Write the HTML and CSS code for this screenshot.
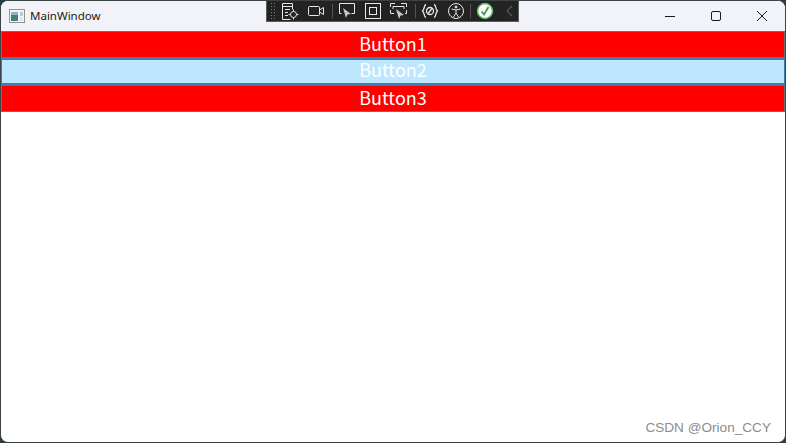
FILE: index.html
```html
<!DOCTYPE html>
<html lang="en">
<head>
    <meta charset="UTF-8">
    <title>MainWindow</title>
    <link rel="stylesheet" href="styles.css">
</head>
<body>
    <div class="window">
        <header class="titlebar">
            <svg class="app-icon" width="16" height="14" viewBox="0 0 16 14">
                <rect x="0.5" y="0.5" width="15" height="13" fill="#f4f6f6" stroke="#8d9499"/>
                <rect x="2" y="3" width="7" height="9" fill="#3f7f7c"/>
                <rect x="2" y="3" width="7" height="3" fill="#8fb4c4"/>
                <rect x="11" y="3" width="3" height="4" fill="#b9cdd6"/>
                <rect x="11" y="8" width="3" height="4" fill="#dfe6e8"/>
            </svg>
            <span class="title">MainWindow</span>
            <div class="caption-buttons">
                <svg class="caption-btn" width="46" height="30" viewBox="0 0 46 30">
                    <path d="M18 15.5h10" stroke="#1a1a1a" stroke-width="1"/>
                </svg>
                <svg class="caption-btn" width="46" height="30" viewBox="0 0 46 30">
                    <rect x="18.5" y="10.5" width="9" height="9" rx="1.5" fill="none" stroke="#1a1a1a"/>
                </svg>
                <svg class="caption-btn" width="46" height="30" viewBox="0 0 46 30">
                    <path d="M18 10l10 10M28 10l-10 10" stroke="#1a1a1a" stroke-width="1" fill="none"/>
                </svg>
            </div>
        </header>

        <!-- debug toolbar that sits over the title bar -->
        <div class="dev-toolbar">
            <span class="grip"></span>
            <svg class="tool" width="20" height="20" viewBox="0 0 20 20" fill="none" stroke="#e8e8e8">
                <path d="M12.5 8.5V2.5H2.5v16h8M2.5 5.5h10M5 8.5h5M5 11.5h3M5 14.500h3"/>
                <circle cx="13.5" cy="13.5" r="3"/>
                <path d="M13.5 8.5v2M13.5 16.5v2M8.5 13.5h2M16.5 13.5h2"/>
            </svg>
            <svg class="tool" width="20" height="20" viewBox="0 0 20 20" fill="none" stroke="#e8e8e8">
                <rect x="2.5" y="5.5" width="11" height="9" rx="1"/>
                <path d="M13.5 9l4-2.500v7l-4-2.500"/>
            </svg>
            <span class="sep"></span>
            <svg class="tool" width="20" height="20" viewBox="0 0 20 20" fill="none" stroke="#e8e8e8">
                <path d="M4.5 12.5H2.5V2.500h15v10h-3"/>
                <path d="M6 7l8 6-3.500.5L9 17z" fill="#c8c8c8" stroke="none"/>
            </svg>
            <svg class="tool" width="20" height="20" viewBox="0 0 20 20" fill="none" stroke="#e8e8e8">
                <rect x="2.500" y="2.500" width="15" height="15"/>
                <rect x="6.500" y="6.500" width="7" height="7"/>
            </svg>
            <svg class="tool" width="20" height="20" viewBox="0 0 20 20" fill="none" stroke="#e8e8e8">
                <path d="M1.500 6V2.500H6M12 2.500h5.500V6M1.500 9v3.500H5M17.500 9v3.500H16M4 8V5.500h11V8"/>
                <path d="M7 8l8 6-3.500.5L10 18z" fill="#c8c8c8" stroke="none"/>
            </svg>
            <span class="sep"></span>
            <svg class="tool" width="20" height="20" viewBox="0 0 20 20" fill="none" stroke="#e8e8e8" stroke-width="1.300">
                <path d="M6 3.500C3.500 4 5 8 2.500 10 5 12 3.500 16 6 16.500M14 3.500c2.500.5 1 4.500 3.500 6.500-2.500 2-1 6-3.500 6.500"/>
                <circle cx="10" cy="10" r="3.500"/>
                <path d="M8 12.500l4-5"/>
            </svg>
            <svg class="tool" width="20" height="20" viewBox="0 0 20 20" fill="none" stroke="#e8e8e8">
                <circle cx="10" cy="10" r="7.500"/>
                <circle cx="10" cy="6" r="1" fill="#e8e8e8"/>
                <path d="M5.500 8l4.500 1 4.500-1M10 9v3l-2.500 4M10 12l2.500 4"/>
            </svg>
            <span class="sep sep-tight"></span>
            <svg class="tool" width="20" height="20" viewBox="0 0 20 20">
                <circle cx="10" cy="10" r="7.500" fill="#fff" stroke="#5fb760" stroke-width="1.500"/>
                <path d="M6.500 10.500l2.500 3 4.500-7.500" fill="none" stroke="#3c9b3f" stroke-width="1.800"/>
            </svg>
            <svg class="tool tool-back" width="20" height="20" viewBox="0 0 20 20" fill="none" stroke="#5c5c5c" stroke-width="1.200">
                <path d="M13 5l-5 5 5 5"/>
            </svg>
        </div>

        <main class="content">
            <button class="btn">Button1</button>
            <button class="btn btn-hover">Button2</button>
            <button class="btn">Button3</button>
        </main>

        <div class="watermark">CSDN @Orion_CCY</div>
    </div>
</body>
</html>
```

FILE: styles.css
```css
* {
    margin: 0;
    padding: 0;
    box-sizing: border-box;
}

html, body {
    width: 786px;
    height: 443px;
    overflow: hidden;
    background-color: #2f3a40;
}

.window {
    position: relative;
    width: 786px;
    height: 443px;
    display: flex;
    flex-direction: column;
    background-color: #fff;
    border: 1px solid #3c4347;
    border-radius: 8px;
    overflow: hidden;
    font-family: "Open Sans", "Noto Sans", sans-serif;
}

.titlebar {
    height: 30px;
    flex: none;
    display: flex;
    align-items: center;
    background-color: #f2f3f8;
    padding-left: 8px;
}

.app-icon {
    margin-right: 5px;
}

.title {
    padding-bottom: 2px;
    font-family: "Noto Sans", sans-serif;
    font-size: 11.5px;
    color: #1a1a1a;
}

.caption-buttons {
    display: flex;
    margin-left: auto;
}

.caption-btn {
    display: block;
}

.dev-toolbar {
    position: absolute;
    top: -1px;
    left: 265px;
    width: 253px;
    height: 22px;
    display: flex;
    align-items: center;
    background-color: #232323;
    border: 1px solid #5a5a5a;
    border-top: none;
}

.grip {
    flex: none;
    width: 6px;
    height: 18px;
    margin: 0 1px 0 3px;
    background-image: radial-gradient(#777 0.6px, transparent 0.8px);
    background-size: 3px 3px;
}

.tool {
    flex: none;
    margin: 0 3px;
}

.tool-back {
    margin: 0 0 0 1px;
}

.sep {
    flex: none;
    width: 1px;
    height: 14px;
    margin: 0 1px 0 3px;
    background-color: #555;
}

.sep-tight {
    margin-left: 1px;
}

.content {
    display: flex;
    flex-direction: column;
}

.btn {
    height: 27px;
    width: 100%;
    padding-bottom: 4px;
    border: 1px solid #707070;
    background-color: #ff0000;
    color: #fff;
    font-family: "Noto Sans CJK SC", "Noto Sans", sans-serif;
    font-size: 18px;
    line-height: 18px;
}

.btn-hover {
    padding-bottom: 6px;
    background-color: #bee6fd;
    border: 2px solid #3c7fb1;
    border-width: 2px 1px;
}

.watermark {
    position: absolute;
    right: 14px;
    bottom: 7px;
    font-family: "Liberation Sans", sans-serif;
    font-size: 13.6px;
    color: #8c8c8c;
}
```
